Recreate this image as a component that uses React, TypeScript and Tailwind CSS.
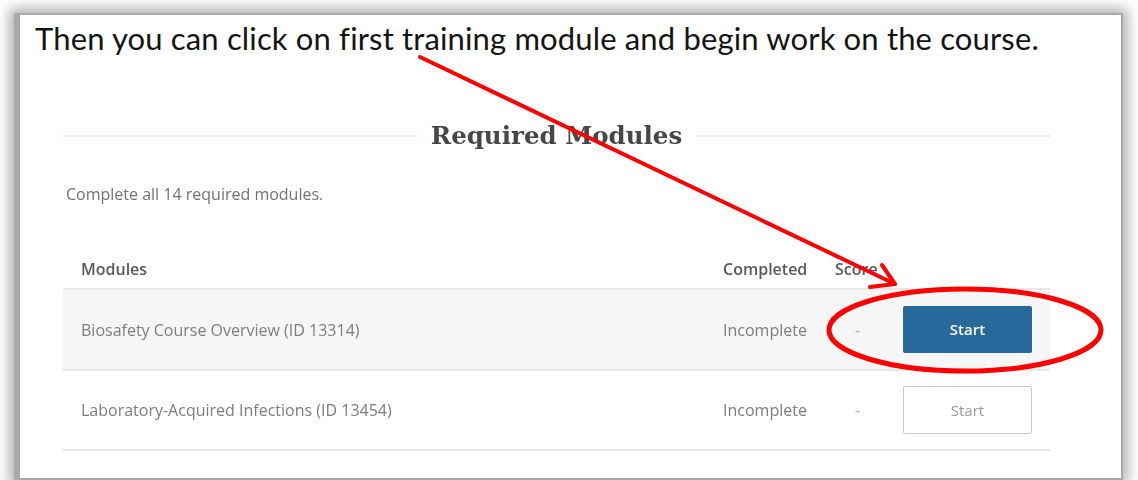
import React from 'react';

type ModuleRow = {
  title: string;
  status: string;
  score: string;
  active: boolean;
};

const modules: ModuleRow[] = [
  { title: 'Biosafety Course Overview (ID 13314)', status: 'Incomplete', score: '-', active: true },
  { title: 'Laboratory-Acquired Infections (ID 13454)', status: 'Incomplete', score: '-', active: false },
];

const sans = { fontFamily: '"Open Sans", "Noto Sans", sans-serif' };

function Annotations() {
  return (
    <svg
      className="pointer-events-none absolute left-0 top-0"
      width="1138"
      height="480"
      viewBox="0 0 1138 480"
      fill="none">
      <g stroke="#ff0000" strokeWidth="4" strokeLinecap="round" strokeLinejoin="round">
        <line x1="420" y1="57" x2="895" y2="284" />
        <polyline points="870,287 895,284 882,265" />
      </g>
      <ellipse cx="965" cy="330" rx="136" ry="41" stroke="#ff0000" strokeWidth="5" />
    </svg>
  );
}

function ModulesPanel() {
  return (
    <div className="ml-[43px] mt-[59px] w-[987px] blur-[0.6px]" style={sans}>
      <div className="flex h-[40px] items-center">
        <div className="h-[2px] flex-1 bg-[#ececec]" />
        <h2
          className="px-[14px] text-[24.5px] font-semibold leading-[40px] text-[#474747]"
          style={{ fontFamily: '"DejaVu Serif", "Liberation Serif", serif' }}>
          Required Modules
        </h2>
        <div className="h-[2px] flex-1 bg-[#ececec]" />
      </div>

      <p className="mt-[28px] pl-[3px] text-[16px] leading-[20px] text-[#727272]">
        Complete all 14 required modules.
      </p>

      <div className="mt-[46px] grid h-[40px] grid-cols-[660px_112px_1fr] items-center border-b-2 border-[#e8e8e8] pl-[18px] text-[16px] font-semibold text-[#5a5a5a]">
        <span>Modules</span>
        <span className="-ml-[18px]">Completed</span>
        <span className="-ml-[18px]">Score</span>
      </div>

      {modules.map((m, i) => (
        <div
          key={m.title}
          className={`grid grid-cols-[642px_112px_68px_129px] items-center border-b-2 border-[#e8e8e8] pl-[18px] text-[16px] text-[#7d7d7d] ${
            i === 0 ? 'h-[81px] bg-[#f6f6f6]' : 'h-[80px] bg-white'
          }`}>
          <span>{m.title}</span>
          <span>{m.status}</span>
          <span className="pl-[20px] text-[#aaa]">{m.score}</span>
          {m.active ? (
            <button className="h-[47px] w-[129px] rounded-[2px] bg-[#27699a] text-[15px] font-semibold text-white">
              Start
            </button>
          ) : (
            <button className="h-[48px] w-[129px] rounded-[2px] border border-[#c8c8c8] bg-white text-[15px] text-[#9a9a9a]">
              Start
            </button>
          )}
        </div>
      ))}
    </div>
  );
}

export default function App() {
  return (
    <div className="relative h-[480px] w-[1138px] overflow-hidden bg-white">
      <div className="pl-[14px] pt-[13px]">
        <div className="h-[467px] w-[1109px] border-b-2 border-l-[6px] border-r-2 border-t-2 border-[#a9a9a9] bg-white shadow-[0_0_12px_5px_rgba(0,0,0,0.3)]">
          <p
            className="pl-[15px] pt-[4px] text-[31px] leading-[38px] tracking-[0.15px] text-[#141414]"
            style={{ fontFamily: 'Lato, "Open Sans", sans-serif' }}>
            Then you can click on first training module and begin work on the course.
          </p>
          <ModulesPanel />
        </div>
      </div>
      <Annotations />
    </div>
  );
}
